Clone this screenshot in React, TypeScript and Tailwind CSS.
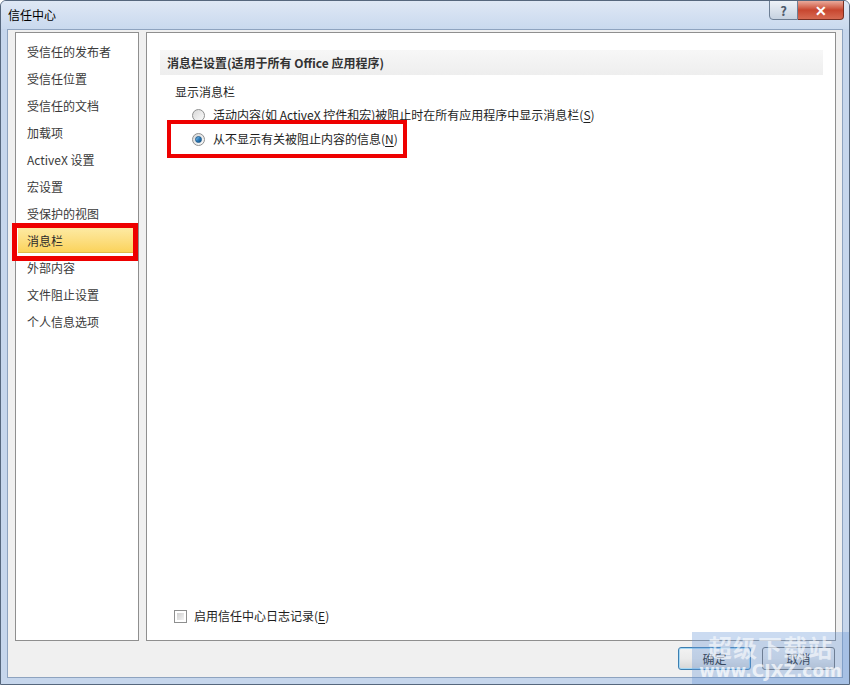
import React from "react";

const navItems = [
  "受信任的发布者",
  "受信任位置",
  "受信任的文档",
  "加载项",
  "ActiveX 设置",
  "宏设置",
  "受保护的视图",
  "消息栏",
  "外部内容",
  "文件阻止设置",
  "个人信息选项",
];

const selected = "消息栏";

function Radio({ checked }: { checked?: boolean }) {
  return (
    <span className="w-[13px] h-[13px] rounded-full border border-[#8e8f8f] bg-linear-to-br from-[#d8d8d8] to-[#fbfbfb] flex items-center justify-center shrink-0">
      {checked && (
        <span className="w-[7px] h-[7px] rounded-full bg-linear-to-br from-[#8cc9ef] via-[#2e7fc0] to-[#15507f] border border-[#1c5a8c]" />
      )}
    </span>
  );
}

function Mnemonic({ k }: { k: string }) {
  return (
    <span>
      (<span className="underline underline-offset-2">{k}</span>)
    </span>
  );
}

export default function App() {
  return (
    <div
      className="w-[850px] h-[685px] relative bg-[#c6d6ec] border border-[#56677d] rounded-t-[6px] flex flex-col overflow-hidden text-[12px] text-[#1e1e1e]"
      style={{ fontFamily: '"Noto Sans CJK SC", "Noto Sans", sans-serif' }}
    >
      {/* title bar */}
      <div className="h-[28px] flex items-start bg-linear-to-b from-[#dfe8f5] to-[#c9d9ee] shrink-0">
        <div className="pl-[7px] pt-[5px] leading-[18px] text-black">信任中心</div>
        <div className="flex-1" />
        <div className="flex mr-[5px] -mt-[1px]">
          <div className="w-[29px] h-[20px] border border-[#6d7f95] rounded-bl-[4px] bg-linear-to-b from-[#eef2f7] to-[#c6d2e0] flex items-center justify-center text-[#4d5a6b] font-bold text-[13px] leading-none">
            ?
          </div>
          <div className="w-[46px] h-[20px] border border-[#7a2f22] border-l-0 rounded-br-[4px] bg-linear-to-b from-[#e9a99b] via-[#c8462f] to-[#d66a52] flex items-center justify-center text-white font-bold text-[14px] leading-none">
            ✕
          </div>
        </div>
      </div>

      {/* client area */}
      <div className="flex-1 mx-[6px] mb-[6px] bg-[#f0f0f0] border border-[#8ea3bf] flex flex-col">
        <div className="flex pt-[2px] pl-[7px] pr-[6px] gap-[7px]">
          {/* left nav */}
          <div className="w-[124px] h-[609px] bg-white border border-[#8f8f8f] pt-[5px] flex flex-col">
            {navItems.map((item) => (
              <div key={item} className="h-[27px] relative flex items-center">
                {item === selected ? (
                  <>
                    <div className="absolute left-[2px] right-[2px] top-[1px] bottom-[1px] bg-linear-to-b from-[#fdeaa2] to-[#fbd35a] border-b border-[#e2b94a]" />
                    <span className="relative pl-[11px] text-[#2b2b2b]">{item}</span>
                    <div className="absolute -left-[4px] right-0 -top-[4px] h-[38px] border-[5px] border-[#ee0000]" />
                  </>
                ) : (
                  <span className="pl-[11px] text-[#3a3a3a]">{item}</span>
                )}
              </div>
            ))}
          </div>

          {/* right content */}
          <div className="w-[690px] h-[609px] bg-white border border-[#8f8f8f] flex flex-col">
            <div className="mt-[17px] ml-[13px] mr-[12px] h-[25px] bg-linear-to-b from-[#f7f7f7] to-[#eeeeee] flex items-center pl-[7px] font-bold text-[#333]">
              消息栏设置(适用于所有 Office 应用程序)
            </div>
            <div className="mt-[9px] pl-[28px] h-[16px] leading-[16px]">显示消息栏</div>
            <div className="mt-[3px] pl-[45px] h-[24px] flex items-center gap-[8px]">
              <Radio />
              <span>
                活动内容(如 ActiveX 控件和宏)被阻止时在所有应用程序中显示消息栏
                <Mnemonic k="S" />
              </span>
            </div>
            <div className="pl-[45px] h-[24px] flex items-center gap-[8px] relative">
              <Radio checked />
              <span>
                从不显示有关被阻止内容的信息
                <Mnemonic k="N" />
              </span>
              <div className="absolute left-[20px] -top-[7px] w-[240px] h-[38px] border-[4px] border-[#ee0000]" />
            </div>
            <div className="flex-1" />
            <div className="pl-[27px] mb-[16px] h-[16px] flex items-center gap-[7px]">
              <span className="w-[13px] h-[13px] border border-[#8e8f8f] bg-white p-[2px] shrink-0">
                <span className="block w-full h-full bg-linear-to-br from-[#cfcfcf] to-[#f4f4f4]" />
              </span>
              <span>
                启用信任中心日志记录
                <Mnemonic k="E" />
              </span>
            </div>
          </div>
        </div>

        {/* buttons */}
        <div className="mt-[6px] flex justify-end gap-[11px] pr-[7px]">
          <button className="w-[73px] h-[23px] rounded-[3px] border border-[#3c7fb1] shadow-[inset_0_0_0_1px_#a6d8f5] bg-linear-to-b from-[#f2f2f2] via-[#ebebeb] to-[#d6d6d6] text-[#1e1e1e] text-[12px]">
            确定
          </button>
          <button className="w-[73px] h-[23px] rounded-[3px] border border-[#707070] bg-linear-to-b from-[#f2f2f2] via-[#ebebeb] to-[#d6d6d6] text-[#1e1e1e] text-[12px]">
            取消
          </button>
        </div>
      </div>

      {/* watermark */}
      <div className="absolute right-0 bottom-0 w-[157px] h-[52px] bg-[#6a98d6]/35 flex flex-col items-center pointer-events-none">
        <div className="text-[24px] font-bold leading-[28px] text-white/60 tracking-[1px] mt-[1px]">
          超级下载站
        </div>
        <div
          className="text-[17px] font-bold leading-[20px] text-white/70"
          style={{ fontFamily: '"DejaVu Sans", sans-serif' }}
        >
          www.CJXZ.com
        </div>
      </div>
    </div>
  );
}
